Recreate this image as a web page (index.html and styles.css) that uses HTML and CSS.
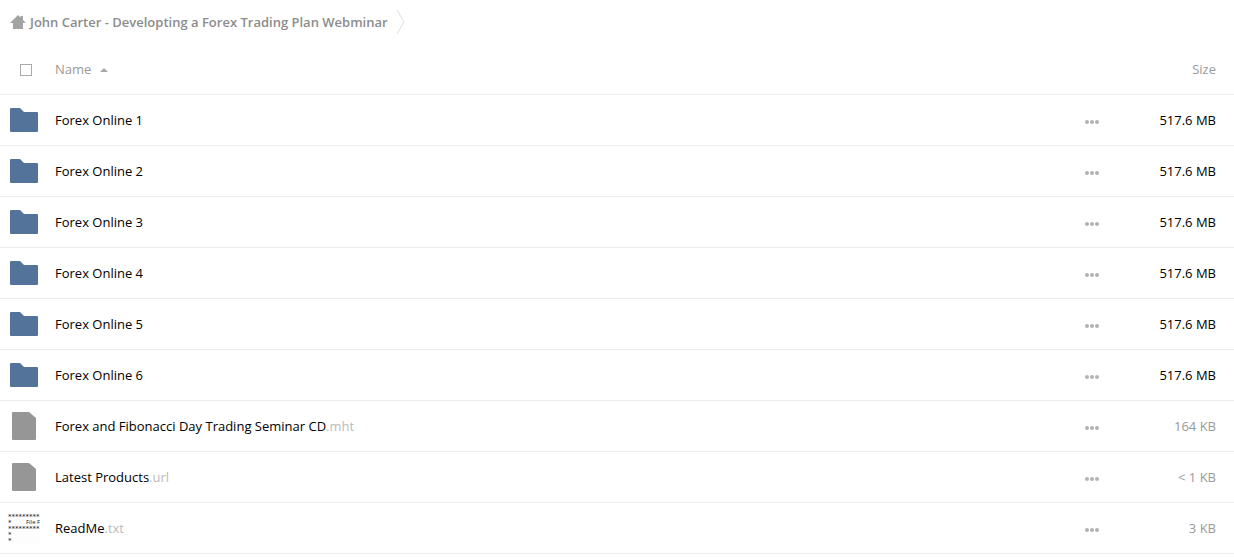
FILE: index.html
```html
<!DOCTYPE html>
<html lang="en">
<head>
<meta charset="utf-8">
<title>Files</title>
<link rel="stylesheet" href="styles.css">
</head>
<body>
<svg class="defs" aria-hidden="true">
  <symbol id="folder" viewBox="0 0 28 24"><path d="M1 0H10L14 4H27Q28 4 28 5V23Q28 24 27 24H1Q0 24 0 23V1Q0 0 1 0Z" fill="#54739a"/></symbol>
  <symbol id="file" viewBox="0 0 24 28"><path d="M1 0H17L24 6V27Q24 28 23 28H1Q0 28 0 27V1Q0 0 1 0Z" fill="#969696"/></symbol>
  <symbol id="dots" viewBox="0 0 14 4"><g fill="#b2b2b2"><circle cx="2" cy="2" r="2"/><circle cx="7" cy="2" r="2"/><circle cx="12" cy="2" r="2"/></g></symbol>
</svg>
<nav class="breadcrumb" aria-label="Breadcrumb">
  <a class="crumb" href="#">
    <svg class="home" viewBox="0 0 16 14" aria-hidden="true"><path d="M8 0L10.5 2.5V1H13V5L16 8H13V14H3V8H0Z" fill="#a3a3a3"/></svg>
    <span>John Carter - Developting a Forex Trading Plan Webminar</span>
  </a>
  <svg class="chevron" viewBox="0 0 10 26" aria-hidden="true"><path d="M1 1L8 13L1 25" fill="none" stroke="#dedede"/></svg>
</nav>
<table class="files">
  <thead>
    <tr>
      <th class="icon"><input class="check" type="checkbox" aria-label="Select all"></th>
      <th class="name"><button class="sort" type="button">Name <svg class="caret" viewBox="0 0 8 4" aria-hidden="true"><path d="M0 4L4 0L8 4Z" fill="#a8a8a8"/></svg></button></th>
      <th class="more"></th>
      <th class="size"><button class="sort" type="button">Size</button></th>
    </tr>
  </thead>
  <tbody>
    <tr><td class="icon"><svg class="folder"><use href="#folder"/></svg></td><td class="name"><a href="#">Forex Online 1</a></td><td class="more"><button type="button" aria-label="Actions"><svg><use href="#dots"/></svg></button></td><td class="size">517.6 MB</td></tr>
    <tr><td class="icon"><svg class="folder"><use href="#folder"/></svg></td><td class="name"><a href="#">Forex Online 2</a></td><td class="more"><button type="button" aria-label="Actions"><svg><use href="#dots"/></svg></button></td><td class="size">517.6 MB</td></tr>
    <tr><td class="icon"><svg class="folder"><use href="#folder"/></svg></td><td class="name"><a href="#">Forex Online 3</a></td><td class="more"><button type="button" aria-label="Actions"><svg><use href="#dots"/></svg></button></td><td class="size">517.6 MB</td></tr>
    <tr><td class="icon"><svg class="folder"><use href="#folder"/></svg></td><td class="name"><a href="#">Forex Online 4</a></td><td class="more"><button type="button" aria-label="Actions"><svg><use href="#dots"/></svg></button></td><td class="size">517.6 MB</td></tr>
    <tr><td class="icon"><svg class="folder"><use href="#folder"/></svg></td><td class="name"><a href="#">Forex Online 5</a></td><td class="more"><button type="button" aria-label="Actions"><svg><use href="#dots"/></svg></button></td><td class="size">517.6 MB</td></tr>
    <tr><td class="icon"><svg class="folder"><use href="#folder"/></svg></td><td class="name"><a href="#">Forex Online 6</a></td><td class="more"><button type="button" aria-label="Actions"><svg><use href="#dots"/></svg></button></td><td class="size">517.6 MB</td></tr>
    <tr><td class="icon"><svg class="file"><use href="#file"/></svg></td><td class="name"><a href="#">Forex and Fibonacci Day Trading Seminar CD<span class="ext">.mht</span></a></td><td class="more"><button type="button" aria-label="Actions"><svg><use href="#dots"/></svg></button></td><td class="size small">164 KB</td></tr>
    <tr><td class="icon"><svg class="file"><use href="#file"/></svg></td><td class="name"><a href="#">Latest Products<span class="ext">.url</span></a></td><td class="more"><button type="button" aria-label="Actions"><svg><use href="#dots"/></svg></button></td><td class="size small">&lt; 1 KB</td></tr>
    <tr><td class="icon"><svg class="thumb" viewBox="0 0 32 32"><rect width="32" height="32" fill="#fdfdfd"/><g class="thumb-text"><text x="0" y="7">*********</text><text x="0" y="13">*</text><text class="thumb-word" x="18" y="12">File F</text><text x="0" y="19">*********</text><text x="0" y="25">*</text><text x="0" y="31">*</text></g></svg></td><td class="name"><a href="#">ReadMe<span class="ext">.txt</span></a></td><td class="more"><button type="button" aria-label="Actions"><svg><use href="#dots"/></svg></button></td><td class="size small">3 KB</td></tr>
  </tbody>
</table>
</body>
</html>
```
FILE: styles.css
```css
* { box-sizing: border-box; }
body {
  margin: 0;
  background: #fff;
  color: #000;
  font: 13px/20px "Open Sans", "Noto Sans", sans-serif;
}
a { color: inherit; text-decoration: none; }
button { padding: 0; border: 0; background: none; color: inherit; font: inherit; cursor: pointer; }
svg { display: block; }
.defs { display: none; }
.breadcrumb { display: flex; align-items: center; gap: 8px; height: 44px; padding-left: 10px; }
.crumb { display: flex; align-items: center; gap: 4px; color: #8c8c8c; font-weight: 600; }
.home { width: 16px; height: 14px; }
.chevron { width: 10px; height: 26px; }
.files { width: 100%; border-collapse: separate; border-spacing: 0; table-layout: fixed; }
.files th, .files td { height: 51px; padding: 0; border-bottom: 1px solid #ebebeb; text-align: left; vertical-align: middle; font-weight: 400; }
.files th { color: #999; }
.files .icon { width: 55px; }
.files .more { width: 49px; }
.files .size { width: 100px; padding-right: 18px; text-align: right; }
.files .small { color: #999; }
.ext { color: #bbb; }
.check { display: block; appearance: none; width: 12px; height: 12px; margin: 1px 0 0 20px; border: 1px solid #aaa; background: #fff; }
.sort { display: inline-flex; align-items: center; gap: 9px; }
.caret { width: 8px; height: 4px; margin-top: 2px; }
.folder { width: 28px; height: 24px; margin-left: 10px; }
.file { width: 24px; height: 28px; margin-left: 12px; }
.thumb { width: 32px; height: 32px; margin-left: 8px; }
.thumb-text { font: 7px "DejaVu Sans", sans-serif; fill: #222; }
.thumb-word { font: 6px "Open Sans", sans-serif; }
.more button { display: block; padding-top: 4px; }
.more svg { width: 14px; height: 4px; }
```
